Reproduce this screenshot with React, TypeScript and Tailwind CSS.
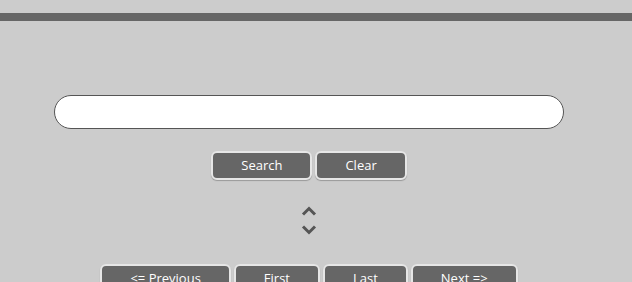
import { useState } from "react";

function Btn({ label }: { label: string }) {
  return (
    <button
      type="button"
      className="rounded-[6px] border-2 border-[#e6e6e6] bg-[#666666] px-[28px] py-[4px] text-[13px] leading-[17px] text-white shadow-[0_1px_1px_rgba(0,0,0,0.25)]"
    >
      {label}
    </button>
  );
}

function Chevron({ up }: { up?: boolean }) {
  return (
    <svg width="16" height="10" viewBox="0 0 16 10" className="block">
      <path
        d={up ? "M2 8.5 L8 2.5 L14 8.5" : "M2 1.5 L8 7.5 L14 1.5"}
        fill="none"
        stroke="#555555"
        strokeWidth="3"
      />
    </svg>
  );
}

export default function App() {
  const [query, setQuery] = useState("");

  return (
    <div
      className="min-h-[282px] w-full overflow-hidden bg-[#cccccc] pt-[13px]"
      style={{ fontFamily: '"Open Sans", "DejaVu Sans", sans-serif' }}
    >
      <div className="h-[8px] bg-[#666666]" />
      <div className="w-[618px]">
        <div className="mt-[74px] px-[54px]">
          <input
            value={query}
            onChange={(e) => setQuery(e.target.value)}
            className="block h-[34px] w-full rounded-full border border-[#555555] bg-white px-4 text-sm outline-none"
          />
        </div>
        <div className="mt-[22px] flex justify-center gap-[3px]">
          <Btn label="Search" />
          <Btn label="Clear" />
        </div>
        <div className="mt-[26px] flex flex-col items-center gap-[9px]">
          <Chevron up />
          <Chevron />
        </div>
        <div className="mt-[29px] flex justify-center gap-[3px]">
          <Btn label="<= Previous" />
          <Btn label="First" />
          <Btn label="Last" />
          <Btn label="Next =>" />
        </div>
      </div>
    </div>
  );
}
